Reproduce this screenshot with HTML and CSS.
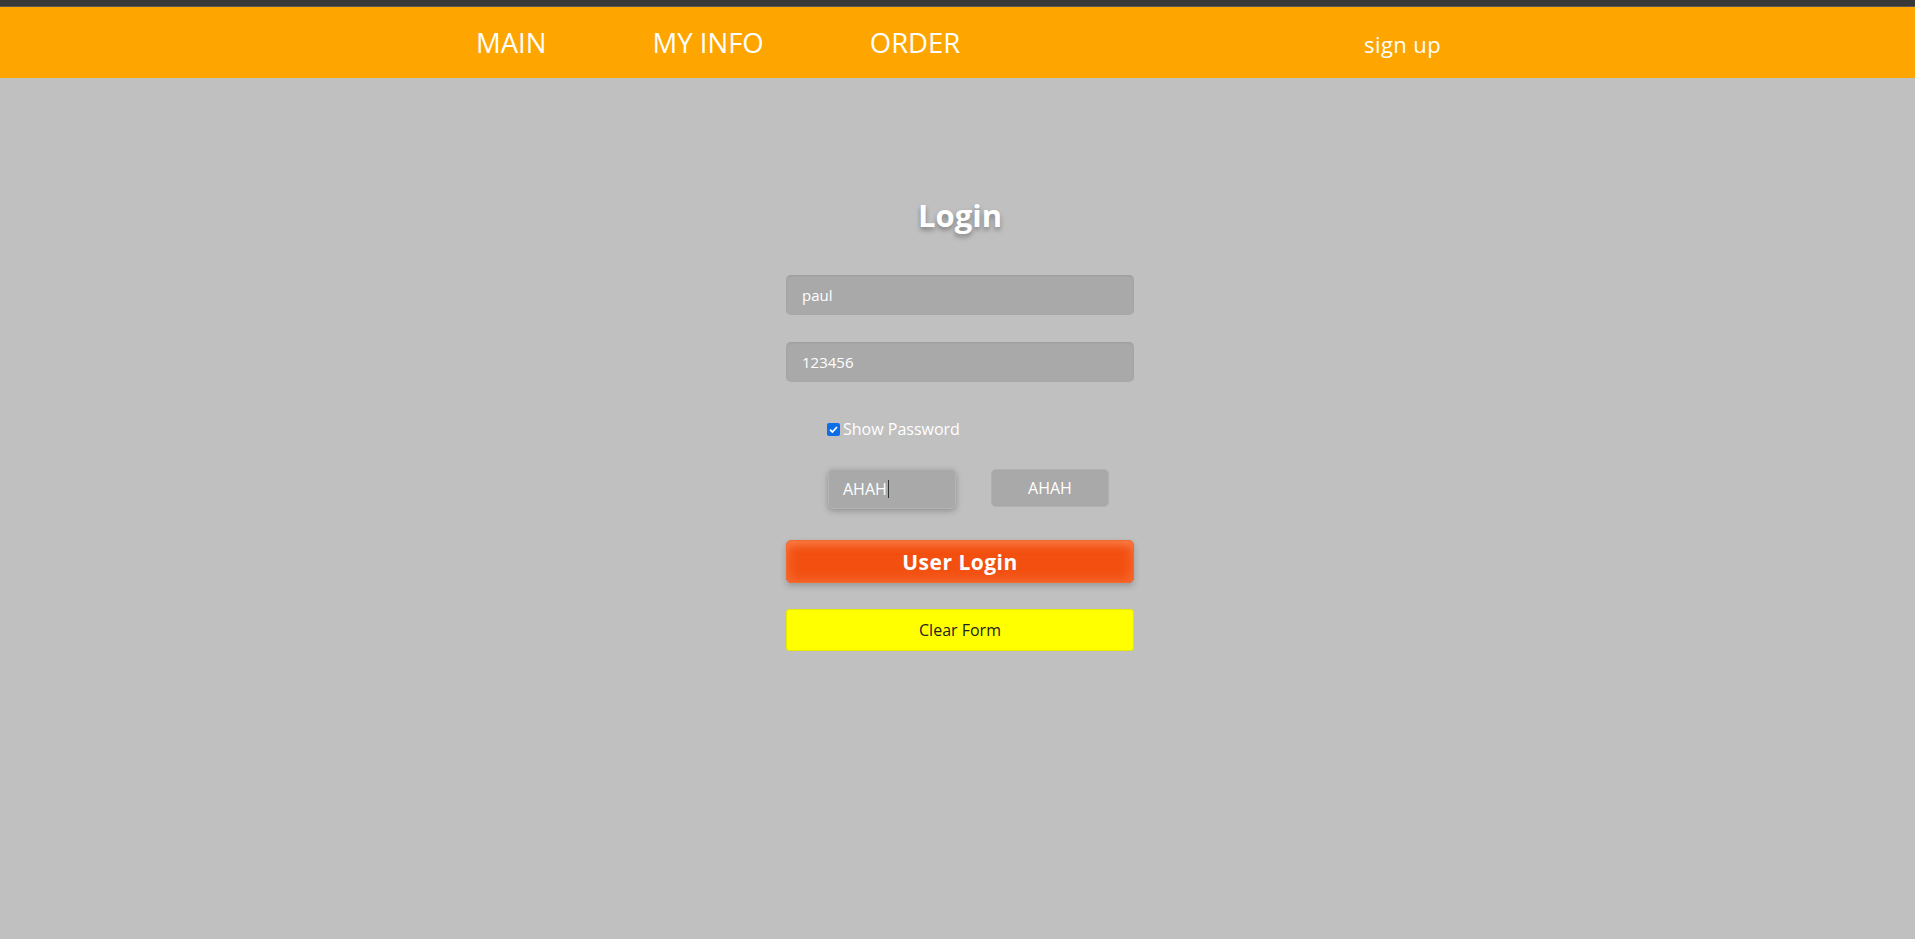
FILE: index.html
```html
<!DOCTYPE html>
<html lang="en">
<head>
<meta charset="utf-8">
<title>Login</title>
<link rel="stylesheet" href="styles.css">
</head>
<body>
<div class="topline"></div>
<header class="header">
  <div class="header-inner">
    <nav class="nav">
      <a class="nav-link" href="#">MAIN</a>
      <a class="nav-link" href="#">MY INFO</a>
      <a class="nav-link" href="#">ORDER</a>
    </nav>
    <a class="signup" href="#">sign up</a>
  </div>
</header>
<main class="page">
  <form class="login">
    <h1 class="title">Login</h1>
    <div class="field">paul</div>
    <div class="field">123456</div>
    <label class="show"><span class="check"><svg width="11" height="11" viewBox="0 0 11 11"><path d="M2 5.6 L4.4 8 L9 3" fill="none" stroke="#fff" stroke-width="1.8"/></svg></span>Show Password</label>
    <div class="captcha">
      <div class="cap-input">AHAH<span class="caret"></span></div>
      <div class="cap-btn">AHAH</div>
    </div>
    <button type="button" class="btn-login">User Login</button>
    <button type="button" class="btn-clear">Clear Form</button>
  </form>
</main>
</body>
</html>
```
FILE: styles.css
```css
* { box-sizing: border-box; }
html, body { margin: 0; padding: 0; }
body {
  background: #c0c0c0;
  font-family: "Open Sans", "Noto Sans", sans-serif;
  min-height: 939px;
}
.topline {
  height: 7px;
  background: #383838;
  border-bottom: 1px solid #575757;
}
.header {
  background: #ffa500;
  height: 71px;
}
.header-inner {
  width: 967px;
  margin: 0 auto;
  padding-left: 2px;
  display: flex;
  align-items: baseline;
  justify-content: space-between;
  padding-top: 19px;
}
.nav {
  display: flex;
  gap: 106px;
  align-items: baseline;
}
.nav-link {
  color: #fff;
  text-decoration: none;
  font-size: 27.5px;
  line-height: 34px;
}
.signup {
  color: #fff;
  text-decoration: none;
  font-size: 22px;
  letter-spacing: 0.4px;
  line-height: 34px;
}
.page {
  display: flex;
  justify-content: center;
  padding-left: 5px;
}
.login {
  width: 348px;
  display: flex;
  flex-direction: column;
  padding-top: 115px;
}
.title {
  margin: 0;
  text-align: center;
  color: #fff;
  font-size: 31px;
  line-height: 44px;
  font-weight: 700;
  text-shadow: 0 3px 5px rgba(0,0,0,0.35);
  height: 44px;
}
.field {
  margin-top: 38px;
  height: 40px;
  background: #a9a9a9;
  border-radius: 5px;
  box-shadow: inset 0 1px 2px rgba(0,0,0,0.08);
  color: #fff;
  font-size: 15px;
  padding: 0 16px;
  line-height: 40px;
}
.field + .field { margin-top: 27px; }
.show {
  margin-top: 36px;
  margin-left: 41px;
  display: flex;
  align-items: center;
  color: #fff;
  font-size: 16px;
  line-height: 22px;
  height: 22px;
}
.check {
  width: 13px;
  height: 13px;
  background: #0b6ee8;
  border-radius: 2px;
  display: inline-flex;
  align-items: center;
  justify-content: center;
  margin-right: 3px;
}
.captcha {
  margin-top: 29px;
  margin-left: 42px;
  display: flex;
  gap: 35px;
}
.cap-input {
  width: 128px;
  height: 40px;
  background: #a9a9a9;
  border-radius: 5px;
  border: 1px solid #b3b3b3;
  box-shadow: 0 2px 6px rgba(0,0,0,0.25);
  color: #fff;
  font-size: 16px;
  line-height: 38px;
  padding-left: 14px;
  display: flex;
  align-items: center;
}
.caret {
  display: inline-block;
  width: 1px;
  height: 18px;
  background: #333;
  margin-left: 1px;
}
.cap-btn {
  width: 118px;
  height: 38px;
  background: #a9a9a9;
  border-radius: 5px;
  border: 1px solid #b0b0b0;
  color: #fff;
  font-size: 16px;
  line-height: 36px;
  text-align: center;
}
.btn-login {
  margin-top: 31px;
  height: 43px;
  width: 348px;
  border: 1px solid #f36a2c;
  border-radius: 5px;
  background: #f24f10;
  box-shadow: inset 0 0 14px rgba(255,160,110,0.45), inset 0 10px 8px -6px rgba(255,170,130,0.35), 0 3px 6px rgba(0,0,0,0.2);
  color: #fff;
  font-family: "Open Sans", "Noto Sans", sans-serif;
  font-size: 21px;
  font-weight: 700;
  letter-spacing: 0.5px;
  padding: 0;
  cursor: pointer;
}
.btn-clear {
  margin-top: 26px;
  height: 42px;
  width: 348px;
  border: 1px solid #e6e600;
  border-radius: 3px;
  background: #ffff00;
  color: #222;
  font-family: "Open Sans", "Noto Sans", sans-serif;
  font-size: 16px;
  padding: 0;
  cursor: pointer;
}
```
